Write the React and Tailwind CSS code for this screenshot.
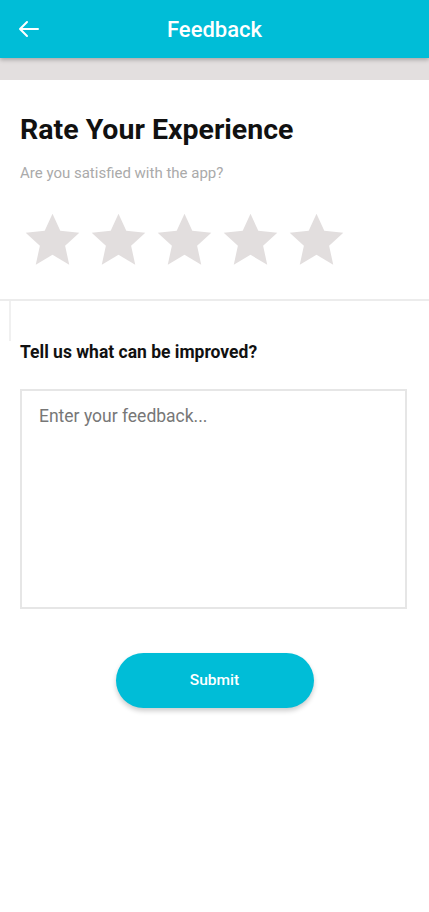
import React from "react";

function Star() {
  return (
    <svg width="55" height="53" viewBox="0 0 24 23" className="block">
      <path
        d="M12 0.3l3.4 7.4 8.3 0.9-6.2 5.6 1.8 8.3L12 18.2l-7.3 4.3 1.8-8.3L0.3 8.6l8.3-0.9z"
        fill="#e2dede"
      />
    </svg>
  );
}

export default function App() {
  return (
    <div className="w-[429px] min-h-[912px] bg-white font-['Roboto',sans-serif] relative">
      <header className="h-[58px] bg-[#00bdd7] flex items-center relative z-10 shadow-[0_2px_4px_rgba(0,0,0,0.25)]">
        <button className="ml-[16px] w-[26px] h-[26px] flex items-center justify-center">
          <svg width="24" height="24" viewBox="0 0 24 24" fill="none" stroke="white" strokeWidth="2" strokeLinecap="round" strokeLinejoin="round">
            <path d="M21 12H3M10 5l-7 7 7 7" />
          </svg>
        </button>
        <h1 className="absolute left-0 right-0 text-center text-white text-[22px] font-medium pointer-events-none">
          Feedback
        </h1>
      </header>
      <div className="h-[22px] bg-[#e3dfdf]" />
      <section className="px-[20px] pt-[33px]">
        <h2 className="text-[28.5px] font-bold text-[#111] leading-[34px]">Rate Your Experience</h2>
        <p className="mt-[17px] text-[15px] text-[#aaaaaa] leading-[18px]">Are you satisfied with the app?</p>
        <div className="mt-[31px] flex gap-[11px] ml-[5px]">
          <Star />
          <Star />
          <Star />
          <Star />
          <Star />
        </div>
      </section>
      <div className="mt-[33px] h-[2px] bg-[#ececec]" />
      <div className="absolute left-[9px] top-[301px] w-[2px] h-[40px] bg-[#f0f0f0]" />
      <section className="px-[20px] pt-[40px]">
        <h3 className="text-[17.5px] font-bold text-[#111] leading-[22px]">Tell us what can be improved?</h3>
        <textarea
          placeholder="Enter your feedback..."
          className="mt-[26px] block w-[387px] h-[220px] border-2 border-[#e6e6e6] px-[17px] py-[12px] text-[17.5px] text-[#333] placeholder:text-[#777] resize-none outline-none"
        />
      </section>
      <div className="mt-[44px] flex justify-center">
        <button className="w-[198px] h-[55px] rounded-full bg-[#00bdd7] text-white text-[15.5px] font-medium shadow-[0_3px_5px_rgba(0,0,0,0.2)]">
          Submit
        </button>
      </div>
    </div>
  );
}
